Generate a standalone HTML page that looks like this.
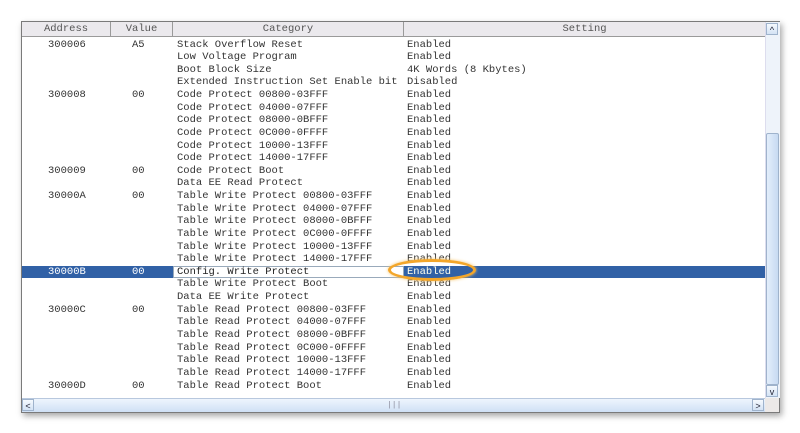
<!DOCTYPE html><html><head><style>
body{margin:0;width:800px;height:433px;background:#fff;position:relative;overflow:hidden;font-family:"Liberation Mono",monospace;}
#win{position:absolute;left:21px;top:21px;width:757px;height:390px;border:1px solid #7a7a7a;background:#fff;box-shadow:2px 3px 6px rgba(0,0,0,.35);}
#hdr{position:absolute;left:0;top:0;width:743px;height:14px;background:#ebe9ed;border-bottom:1px solid #9a9a9a;}
.h{position:absolute;top:0;height:14px;line-height:14px;font-size:10.5px;color:#555;text-align:center;border-right:1px solid #9a9a9a;box-sizing:border-box;}
.r{position:absolute;left:0;width:743px;height:12.63px;font-size:10.5px;line-height:12.6px;color:#333;white-space:pre;}
.r span{position:absolute;top:0;}
.sel{background:#3161a6;color:#fff;}
#vs{position:absolute;left:743px;top:0;width:14px;height:376px;background:#eef3fa;border-left:1px solid #dde;}
#hs{position:absolute;left:0;top:376px;width:743px;height:14px;background:linear-gradient(#eef5fd,#cfe0f5);border-top:1px solid #b8c8de;box-sizing:border-box;}
.btn{position:absolute;width:12px;height:12px;border:1px solid #9fb3cc;background:linear-gradient(#f5f9fe,#d4e3f5);font-size:9px;line-height:12px;text-align:center;color:#223;font-family:"Liberation Sans",sans-serif;box-sizing:border-box;}
</style></head><body>
<div id="win">
<div id="hdr">
<div class="h" style="left:0;width:89px">Address</div>
<div class="h" style="left:89px;width:62px">Value</div>
<div class="h" style="left:151px;width:231px">Category</div>
<div class="h" style="left:382px;width:361px;border-right:none">Setting</div>
</div>
<div id="rows"></div>
<div id="vs">
<div class="btn" style="left:0;top:1px">^</div>
<div style="position:absolute;left:0;top:111px;width:13px;height:252px;border:1px solid #9fb3cc;box-sizing:border-box;border-radius:2px;background:linear-gradient(90deg,#e3eefb,#c7daf2);"></div>
<div class="btn" style="left:0;top:363px">v</div>
</div>
<div id="hs">
<div class="btn" style="left:0;top:0">&lt;</div>
<div style="position:absolute;left:365px;top:2px;font-size:8px;color:#889">|||</div>
<div class="btn" style="left:730px;top:0">&gt;</div>
</div>
<div style="position:absolute;left:743px;top:376px;width:14px;height:14px;background:#ece9e8"></div>
</div>
<div style="position:absolute;left:388px;top:259px;width:88px;height:22px;border:3px solid #f3a62a;border-radius:50%;box-sizing:border-box;box-shadow:0 0 3px #f7c56a;"></div>
<script>
var d=[["300006","A5","Stack Overflow Reset","Enabled"],["","","Low Voltage Program","Enabled"],["","","Boot Block Size","4K Words (8 Kbytes)"],["","","Extended Instruction Set Enable bit","Disabled"],["300008","00","Code Protect 00800-03FFF","Enabled"],["","","Code Protect 04000-07FFF","Enabled"],["","","Code Protect 08000-0BFFF","Enabled"],["","","Code Protect 0C000-0FFFF","Enabled"],["","","Code Protect 10000-13FFF","Enabled"],["","","Code Protect 14000-17FFF","Enabled"],["300009","00","Code Protect Boot","Enabled"],["","","Data EE Read Protect","Enabled"],["30000A","00","Table Write Protect 00800-03FFF","Enabled"],["","","Table Write Protect 04000-07FFF","Enabled"],["","","Table Write Protect 08000-0BFFF","Enabled"],["","","Table Write Protect 0C000-0FFFF","Enabled"],["","","Table Write Protect 10000-13FFF","Enabled"],["","","Table Write Protect 14000-17FFF","Enabled"],["30000B","00","Config. Write Protect","Enabled"],["","","Table Write Protect Boot","Enabled"],["","","Data EE Write Protect","Enabled"],["30000C","00","Table Read Protect 00800-03FFF","Enabled"],["","","Table Read Protect 04000-07FFF","Enabled"],["","","Table Read Protect 08000-0BFFF","Enabled"],["","","Table Read Protect 0C000-0FFFF","Enabled"],["","","Table Read Protect 10000-13FFF","Enabled"],["","","Table Read Protect 14000-17FFF","Enabled"],["30000D","00","Table Read Protect Boot","Enabled"]];
var h="";d.forEach(function(r,i){var s=i==18;h+='<div class="r'+(s?' sel':'')+'" style="top:'+(16.5+i*12.63)+'px">'+'<span style="left:26px">'+r[0]+'</span><span style="left:110px">'+r[1]+'</span>'+(s?'<span style="left:151px;width:231px;height:12px;background:#fff;color:#222;border:1px solid #9ab;box-sizing:border-box;line-height:10.6px;padding-left:3px">'+r[2]+'</span>':'<span style="left:155px">'+r[2]+'</span>')+'<span style="left:385px'+(s?';color:#ffe':'')+'">'+r[3]+'</span></div>';});
document.getElementById("rows").innerHTML=h;
</script>
</body></html>
